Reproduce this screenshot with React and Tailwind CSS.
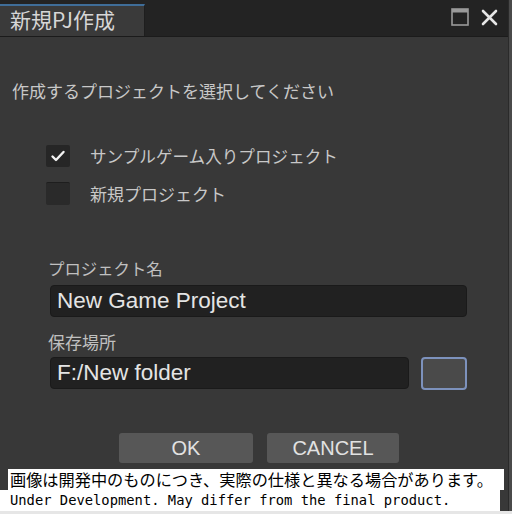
export default function App() {
  const jp = { fontFamily: '"Noto Sans CJK JP", "Noto Sans", sans-serif' };
  const lat = { fontFamily: '"Liberation Sans", Arial, sans-serif' };
  return (
    <div className="relative w-[512px] h-[514px] overflow-hidden bg-[#383838]" style={jp}>
      {/* title bar */}
      <div className="flex h-[37px] bg-[#232323] border-b border-[#1b1b1b]">
        <div className="mt-[4px] w-[145px] border-t-2 border-[#3f6d98] bg-[#3a3a3a] border-r border-r-[#1e1e1e] flex items-center pl-[10px]">
          <span className="text-[21px] leading-none text-[#d6d6d6] -mt-[4px]">新規PJ作成</span>
        </div>
        <div className="flex-1" />
        <div className="flex items-center gap-[12px] pr-[14px] -mt-[2px]">
          <svg width="18" height="18" viewBox="0 0 18 18">
            <rect x="1" y="1" width="16" height="16" fill="none" stroke="#9a9a9a" strokeWidth="1.6" />
            <rect x="1" y="1" width="16" height="3.5" fill="#9a9a9a" />
          </svg>
          <svg width="17" height="17" viewBox="0 0 17 17">
            <path d="M2 2 L15 15 M15 2 L2 15" stroke="#e6e6e6" strokeWidth="2.6" strokeLinecap="round" />
          </svg>
        </div>
      </div>

      {/* body */}
      <div className="flex flex-col">
        <div className="mt-[42px] pl-[12px] h-[24px] leading-[24px] text-[17px] text-[#c8c8c8]">
          作成するプロジェクトを選択してください
        </div>

        <div className="mt-[42px] ml-[46px] flex items-center h-[22px]">
          <div className="w-[24px] h-[22px] rounded-[2px] bg-[#262626] flex items-center justify-center">
            <svg width="16" height="14" viewBox="0 0 16 14">
              <path d="M2.5 7.5 L6 11 L13.5 3" fill="none" stroke="#f2f2f2" strokeWidth="2.4" strokeLinecap="round" strokeLinejoin="round" />
            </svg>
          </div>
          <span className="ml-[20px] text-[16.6px] text-[#c8c8c8] leading-none">サンプルゲーム入りプロジェクト</span>
        </div>

        <div className="mt-[15px] ml-[46px] flex items-center h-[23px]">
          <div className="w-[24px] h-[23px] rounded-[2px] bg-[#2a2a2a] border-t border-[#1e1e1e]" />
          <span className="ml-[20px] text-[17px] text-[#c8c8c8] leading-none">新規プロジェクト</span>
        </div>

        <div className="mt-[52px] ml-[48px] h-[22px] leading-[22px] text-[16.4px] text-[#c0c0c0]">プロジェクト名</div>
        <div className="mt-[6px] ml-[50px] w-[417px] h-[32px] rounded-[4px] bg-[#212121] border border-[#1a1a1a] flex items-center pl-[6px]">
          <span className="text-[22.5px] text-[#e4e4e4] leading-none" style={lat}>New Game Project</span>
        </div>

        <div className="mt-[14px] ml-[48px] h-[22px] leading-[22px] text-[17px] text-[#c0c0c0]">保存場所</div>
        <div className="mt-[4px] ml-[50px] flex gap-[12px]">
          <div className="w-[359px] h-[32px] rounded-[4px] bg-[#212121] border border-[#1a1a1a] flex items-center pl-[6px]">
            <span className="text-[22.5px] text-[#e4e4e4] leading-none" style={lat}>F:/New folder</span>
          </div>
          <div className="w-[46px] h-[33px] rounded-[4px] bg-[#4a4a4a] border-2 border-[#7d92bd]" />
        </div>

        <div className="mt-[43px] ml-[119px] flex gap-[14px]">
          <div className="w-[134px] h-[30px] rounded-[3px] bg-[#575757] flex items-center justify-center text-[20px] text-[#e2e2e2]" style={lat}>OK</div>
          <div className="w-[132px] h-[30px] rounded-[3px] bg-[#575757] flex items-center justify-center text-[20px] text-[#e2e2e2]" style={lat}>CANCEL</div>
        </div>
      </div>

      {/* right edge */}
      <div className="absolute top-0 right-0 w-[4px] h-full bg-[#4a4a4a] border-l border-[#2a2a2a]" />

      {/* caption overlay */}
      <div className="absolute left-0 top-[469px] w-[512px]">
        <div className="ml-[8px] w-[496px] h-[21px] bg-white flex items-center pl-[2px]">
          <span className="text-[16.2px] leading-none text-black whitespace-nowrap">画像は開発中のものにつき、実際の仕様と異なる場合があります。</span>
        </div>
        <div className="w-[500px] h-[21px] bg-white flex items-center pl-[10px]">
          <span className="text-[13.8px] leading-none text-black whitespace-nowrap" style={{ fontFamily: '"DejaVu Sans Mono", monospace' }}>Under Development. May differ from the final product.</span>
        </div>
        <div className="w-[512px] h-[4px] bg-[#e6e6e6]" />
      </div>
    </div>
  );
}
